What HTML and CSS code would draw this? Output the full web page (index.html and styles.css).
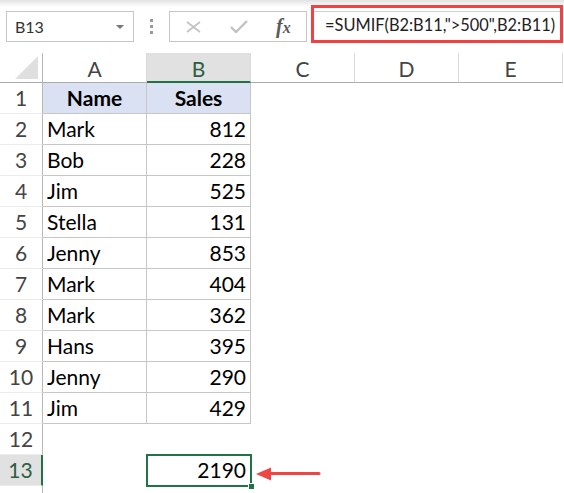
FILE: index.html
```html
<!DOCTYPE html>
<html lang="en">
  <head>
    <meta charset="UTF-8">
    <meta name="viewport" content="width=device-width, initial-scale=1.0">
    <title>SUMIF example</title>
    <link rel="stylesheet" href="styles.css">
  </head>
  <body>
    <div class="toolbar">
      <div class="name-box">
        <span>B13</span>
        <span class="caret"></span>
      </div>
      <div class="grip">
        <span></span><span></span><span></span>
      </div>
      <div class="fx-box">
        <svg class="fx-icon" width="15" height="12" viewBox="0 0 15 12">
          <path d="M1 1 L14 11 M14 1 L1 11" stroke="#c2c2c2" stroke-width="1.6" fill="none"/>
        </svg>
        <svg class="fx-icon" width="18" height="13" viewBox="0 0 18 13">
          <path d="M1 7 L6 12 L17 1" stroke="#c2c2c2" stroke-width="2.4" fill="none"/>
        </svg>
        <span class="fx-label">f<span>x</span></span>
      </div>
      <div class="formula">
        <div class="formula-input">=SUMIF(B2:B11,"&gt;500",B2:B11)</div>
      </div>
    </div>

    <div class="sheet">
      <div class="corner">
        <svg width="24" height="24" viewBox="0 0 24 24"><polygon points="23,0 23,23 0,23" fill="#dfdfdf"/></svg>
      </div>
      <div class="col-head">A</div>
      <div class="col-head active">B</div>
      <div class="col-head">C</div>
      <div class="col-head">D</div>
      <div class="col-head">E</div>

      <div class="row-head">1</div>
      <div class="cell boxed title">Name</div>
      <div class="cell boxed title">Sales</div>
      <div class="cell"></div><div class="cell"></div><div class="cell"></div>

      <div class="row-head">2</div>
      <div class="cell boxed">Mark</div>
      <div class="cell boxed num">812</div>
      <div class="cell"></div><div class="cell"></div><div class="cell"></div>

      <div class="row-head">3</div>
      <div class="cell boxed">Bob</div>
      <div class="cell boxed num">228</div>
      <div class="cell"></div><div class="cell"></div><div class="cell"></div>

      <div class="row-head">4</div>
      <div class="cell boxed">Jim</div>
      <div class="cell boxed num">525</div>
      <div class="cell"></div><div class="cell"></div><div class="cell"></div>

      <div class="row-head">5</div>
      <div class="cell boxed">Stella</div>
      <div class="cell boxed num">131</div>
      <div class="cell"></div><div class="cell"></div><div class="cell"></div>

      <div class="row-head">6</div>
      <div class="cell boxed">Jenny</div>
      <div class="cell boxed num">853</div>
      <div class="cell"></div><div class="cell"></div><div class="cell"></div>

      <div class="row-head">7</div>
      <div class="cell boxed">Mark</div>
      <div class="cell boxed num">404</div>
      <div class="cell"></div><div class="cell"></div><div class="cell"></div>

      <div class="row-head">8</div>
      <div class="cell boxed">Mark</div>
      <div class="cell boxed num">362</div>
      <div class="cell"></div><div class="cell"></div><div class="cell"></div>

      <div class="row-head">9</div>
      <div class="cell boxed">Hans</div>
      <div class="cell boxed num">395</div>
      <div class="cell"></div><div class="cell"></div><div class="cell"></div>

      <div class="row-head">10</div>
      <div class="cell boxed">Jenny</div>
      <div class="cell boxed num">290</div>
      <div class="cell"></div><div class="cell"></div><div class="cell"></div>

      <div class="row-head">11</div>
      <div class="cell boxed">Jim</div>
      <div class="cell boxed num">429</div>
      <div class="cell"></div><div class="cell"></div><div class="cell"></div>

      <div class="row-head">12</div>
      <div class="cell"></div><div class="cell"></div>
      <div class="cell"></div><div class="cell"></div><div class="cell"></div>

      <div class="row-head active">13</div>
      <div class="cell"></div>
      <div class="cell num selected">2190<span class="fill-handle"></span></div>
      <div class="cell">
        <svg class="arrow" width="66" height="16" viewBox="0 0 66 16">
          <polygon points="0,8 15,1.5 15,14.5" fill="#f14545"/>
          <line x1="14" y1="7.5" x2="63" y2="7.5" stroke="#f14545" stroke-width="3" stroke-linecap="round"/>
        </svg>
      </div>
      <div class="cell"></div><div class="cell"></div>

      <div class="row-head blank"></div>
    </div>
  </body>
</html>
```

FILE: styles.css
```css
:root {
  --excel-green: #217346;
  --head-bg: #e1e1e1;
  --grid-color: #c6c6c6;
  --head-text: #444;
  --red: #f04242;
}

body {
  margin: 0;
  background: white;
  font-family: 'Lato', sans-serif;
  overflow: hidden;
}

/* formula bar */
.toolbar {
  display: flex;
  align-items: flex-start;
  height: 53px;
  background: linear-gradient(#e2e2e2, #fff 7px);
}

.name-box {
  box-sizing: border-box;
  display: flex;
  align-items: center;
  justify-content: space-between;
  width: 128px;
  height: 31px;
  margin: 11px 0 0 6px;
  padding: 0 9px 0 8px;
  background: white;
  border: 1px solid var(--grid-color);
  font-size: 16px;
  color: #333;
}

.caret {
  width: 0;
  height: 0;
  border-left: 4px solid transparent;
  border-right: 4px solid transparent;
  border-top: 4px solid #777;
}

.grip {
  display: flex;
  flex-direction: column;
  gap: 3px;
  margin: 19px 0 0 16px;
}

.grip span {
  width: 3px;
  height: 3px;
  background: #999;
}

.fx-box {
  box-sizing: border-box;
  display: flex;
  align-items: center;
  width: 138px;
  height: 31px;
  margin: 11px 0 0 16px;
  padding-left: 16px;
  background: white;
  border: 1px solid var(--grid-color);
}

.fx-icon {
  margin-right: 29px;
}

.fx-label {
  margin-left: -1px;
  font-family: 'Liberation Serif', serif;
  font-style: italic;
  font-weight: bold;
  font-size: 20px;
  color: #5a5a5a;
}

.fx-label span {
  font-size: 16px;
}

.formula {
  box-sizing: border-box;
  width: 252px;
  height: 38px;
  margin: 5px 0 0 4px;
  border: 3px solid var(--red);
}

.formula-input {
  height: 100%;
  box-sizing: border-box;
  margin-top: 3px;
  padding-left: 11px;
  border-top: 1px solid #d0d0d0;
  font-size: 16.4px;
  line-height: 26px;
  color: #222;
  white-space: nowrap;
}

/* sheet grid */
.sheet {
  display: grid;
  grid-template-columns: 43px repeat(5, 104px);
  grid-template-rows: 30px;
  grid-auto-rows: 31px;
  font-size: 21px;
}

.corner,
.col-head,
.row-head,
.cell {
  box-sizing: border-box;
}

.corner {
  display: flex;
  align-items: flex-end;
  justify-content: flex-end;
  padding: 0 3px 2px 0;
  border-right: 1px solid #b8b8b8;
  border-bottom: 1px solid #ababab;
}

.col-head {
  padding-top: 3px;
  line-height: 26px;
  text-align: center;
  color: var(--head-text);
  border-right: 1px solid #dadada;
  border-bottom: 1px solid #ababab;
}

.col-head.active {
  background: var(--head-bg);
  color: #2d5e43;
  border-bottom: 2px solid var(--excel-green);
}

.row-head {
  line-height: 30px;
  text-align: center;
  color: var(--head-text);
  border-right: 1px solid #b8b8b8;
  border-bottom: 1px solid #ececec;
}

.row-head.active {
  background: var(--head-bg);
  color: #2d5e43;
  border-right: 2px solid var(--excel-green);
}

.row-head.blank {
  border-bottom: none;
}

.cell {
  padding: 0 4px;
  line-height: 30px;
  color: #000;
  white-space: nowrap;
}

.cell.boxed {
  border-right: 1px solid var(--grid-color);
  border-bottom: 1px solid var(--grid-color);
}

.cell.title {
  background: #d9e1f2;
  font-weight: bold;
  text-align: center;
}

.cell.num {
  text-align: right;
}

.cell.selected {
  position: relative;
  z-index: 1;
  padding-right: 5px;
  outline: 2px solid var(--excel-green);
  outline-offset: -1px;
}

.fill-handle {
  position: absolute;
  right: -4px;
  bottom: -4px;
  width: 5px;
  height: 5px;
  background: var(--excel-green);
  border: 1px solid white;
}

.arrow {
  display: block;
  margin: 11px 0 0 1px;
}
```
